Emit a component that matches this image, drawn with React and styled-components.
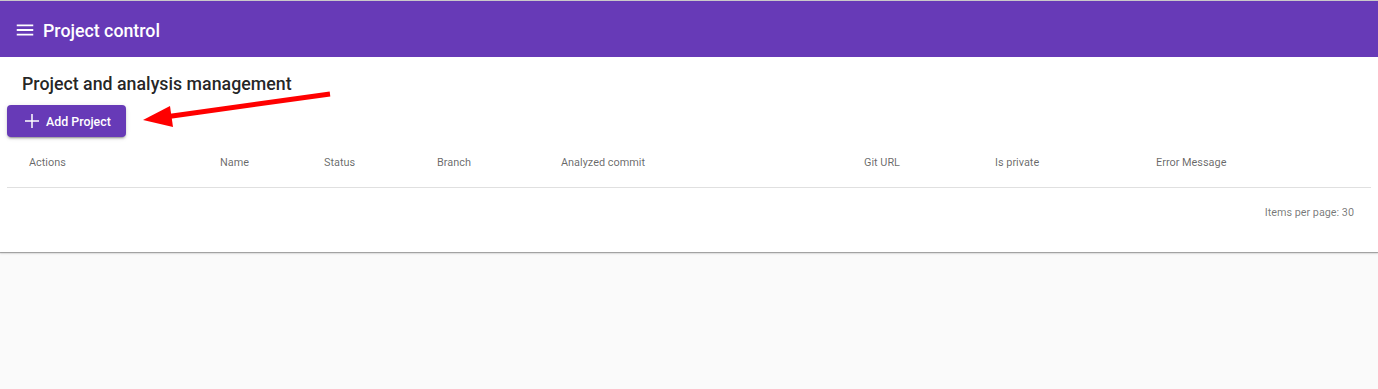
import React from 'react'
import styled, { createGlobalStyle } from 'styled-components'

const GlobalStyle = createGlobalStyle`
  html, body {
    margin: 0;
    padding: 0;
    background: #fafafa;
    font-family: Roboto, "Noto Sans", sans-serif;
  }
`

const Page = styled.div`
  position: relative;
  min-height: 389px;
  border-top: 1px solid #c9c9c9;
`

const Toolbar = styled.header`
  box-sizing: border-box;
  height: 56px;
  background: #673ab7;
  color: #fff;
  display: flex;
  align-items: center;
  padding: 2px 14px 0;
  gap: 7px;
`

const ToolbarTitle = styled.h1`
  margin: 0;
  font-size: 17.8px;
  font-weight: 500;
`

const Card = styled.section`
  background: #fff;
  padding-bottom: 16px;
  box-shadow: 0 1px 1px rgba(0, 0, 0, 0.3), 0 2px 2px rgba(0, 0, 0, 0.08);
`

const Heading = styled.h2`
  margin: 0;
  padding: 15px 22px 0;
  font-size: 17.8px;
  line-height: 24px;
  font-weight: 500;
  color: rgba(0, 0, 0, 0.87);
`

const Actions = styled.div`
  padding: 9px 7px 0;
`

const RaisedButton = styled.button`
  display: inline-flex;
  align-items: center;
  gap: 2px;
  height: 32px;
  padding: 0 15px 0 13px;
  border: none;
  border-radius: 4px;
  background: #673ab7;
  color: #fff;
  font-family: Roboto, sans-serif;
  font-size: 12.4px;
  font-weight: 500;
  box-shadow: 0 3px 1px -2px rgba(0, 0, 0, 0.2), 0 2px 2px 0 rgba(0, 0, 0, 0.14), 0 1px 5px 0 rgba(0, 0, 0, 0.12);
`

const Table = styled.div`
  margin: 0 7px;
`

const HeaderRow = styled.div`
  display: grid;
  grid-template-columns: 191px 104px 113px 124px 303px 131px 161px 1fr;
  align-items: center;
  height: 50px;
  padding-left: 22px;
  border-bottom: 1px solid #e0e0e0;
`

const HeaderCell = styled.div`
  font-size: 10.9px;
  font-weight: 400;
  color: rgba(0, 0, 0, 0.6);
`

const Paginator = styled.div`
  display: flex;
  justify-content: flex-end;
  align-items: center;
  height: 48px;
  padding-right: 17px;
  font-size: 10.8px;
  color: rgba(0, 0, 0, 0.54);
`

const Annotation = styled.svg`
  position: absolute;
  left: 0;
  top: 0;
  pointer-events: none;
`

const columns = ['Actions', 'Name', 'Status', 'Branch', 'Analyzed commit', 'Git URL', 'Is private', 'Error Message']

function MenuIcon() {
  return (
    <svg width="22" height="22" viewBox="0 0 24 24" fill="#fff">
      <path d="M3 18h18v-2H3v2zm0-5h18v-2H3v2zm0-7v2h18V6H3z" />
    </svg>
  )
}

function AddIcon() {
  return (
    <svg width="24" height="24" viewBox="0 0 24 24" fill="#fff">
      <path d="M19 12.75h-6.25V19h-1.5v-6.25H5v-1.5h6.25V5h1.5v6.25H19v1.5z" />
    </svg>
  )
}

export default function App() {
  return (
    <Page>
      <GlobalStyle />
      <Toolbar>
        <MenuIcon />
        <ToolbarTitle>Project control</ToolbarTitle>
      </Toolbar>
      <Card>
        <Heading>Project and analysis management</Heading>
        <Actions>
          <RaisedButton>
            <AddIcon />
            Add Project
          </RaisedButton>
        </Actions>
        <Table>
          <HeaderRow>
            {columns.map((c) => (
              <HeaderCell key={c}>{c}</HeaderCell>
            ))}
          </HeaderRow>
          <Paginator>Items per page: 30</Paginator>
        </Table>
      </Card>
      <Annotation width="1378" height="389">
        <line x1="330" y1="93" x2="165" y2="116" stroke="#ff0000" strokeWidth="5" />
        <polygon points="143,119 170,105 173,126" fill="#ff0000" />
      </Annotation>
    </Page>
  )
}
